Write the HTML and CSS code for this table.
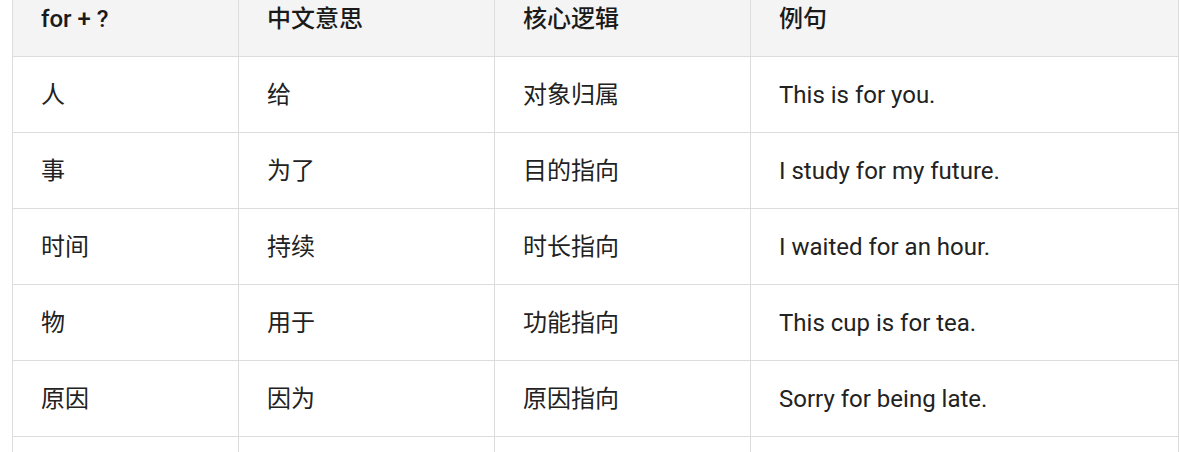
FILE: index.html
```html
<!DOCTYPE html>
<html lang="zh">
<head>
<meta charset="utf-8">
<link rel="stylesheet" href="styles.css">
</head>
<body>
<table class="grid">
  <colgroup>
    <col class="c1"><col class="c2"><col class="c3"><col class="c4">
  </colgroup>
  <thead>
    <tr><th>for + ?</th><th>中文意思</th><th>核心逻辑</th><th>例句</th></tr>
  </thead>
  <tbody>
    <tr><td>人</td><td>给</td><td>对象归属</td><td>This is for you.</td></tr>
    <tr><td>事</td><td>为了</td><td>目的指向</td><td>I study for my future.</td></tr>
    <tr><td>时间</td><td>持续</td><td>时长指向</td><td>I waited for an hour.</td></tr>
    <tr><td>物</td><td>用于</td><td>功能指向</td><td>This cup is for tea.</td></tr>
    <tr><td>原因</td><td>因为</td><td>原因指向</td><td>Sorry for being late.</td></tr>
    <tr><td>&nbsp;</td><td>&nbsp;</td><td>&nbsp;</td><td>&nbsp;</td></tr>
  </tbody>
</table>
</body>
</html>
```
FILE: styles.css
```css
html, body {
  margin: 0;
  padding: 0;
  background: #ffffff;
  overflow: hidden;
}
body {
  font-family: Roboto, "Noto Sans CJK SC", sans-serif;
  color: #222222;
}
.grid {
  margin: -20px 0 0 12px;
  width: 1166px;
  border-collapse: collapse;
  table-layout: fixed;
}
.c1 { width: 226px; }
.c2 { width: 256px; }
.c3 { width: 256px; }
.c4 { width: 428px; }
.grid th,
.grid td {
  border: 1px solid #dcdcdc;
  height: 76px;
  padding: 0 0 0 28px;
  text-align: left;
  font-size: 24px;
  line-height: 28px;
  vertical-align: middle;
  box-sizing: border-box;
}
.grid th {
  background: #f4f4f4;
  font-weight: 500;
  color: #1a1a1a;
}
.grid td {
  font-weight: 400;
}
```
